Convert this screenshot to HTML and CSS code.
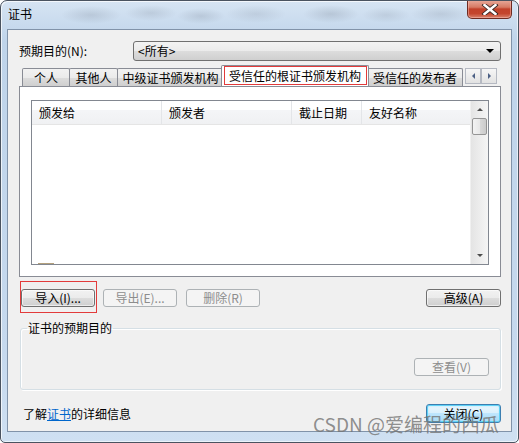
FILE: index.html
```html
<!DOCTYPE html>
<html lang="zh-CN">
<head>
  <meta charset="UTF-8">
  <meta name="viewport" content="width=device-width, initial-scale=1.0">
  <title>证书</title>
  <link rel="stylesheet" href="styles.css">
</head>
<body>
  <div class="window">
    <div class="titlebar">
      <span class="title">证书</span>
      <button class="close-btn">
        <svg width="18" height="11" viewBox="0 0 18 11">
          <path d="M3.5 1 L14.5 10 M14.5 1 L3.5 10" stroke="#3a2a28" stroke-width="4.2" stroke-linecap="square"/>
          <path d="M3.5 1 L14.5 10 M14.5 1 L3.5 10" stroke="#ffffff" stroke-width="2.4" stroke-linecap="square"/>
        </svg>
      </button>
    </div>

    <div class="client">
      <div class="purpose-row">
        <label class="purpose-label">预期目的(N):</label>
        <div class="combo">
          <span>&lt;所有&gt;</span>
          <span class="combo-arrow"></span>
        </div>
      </div>

      <div class="tabs">
        <div class="tab tab-personal">个人</div>
        <div class="tab tab-others">其他人</div>
        <div class="tab tab-inter">中级证书颁发机构</div>
        <div class="tab tab-active"><span class="mark">受信任的根证书颁发机构</span></div>
        <div class="tab tab-publisher">受信任的发布者</div>
        <div class="tab-scroll">
          <span class="scroll-btn"><span class="tri-left"></span></span>
          <span class="scroll-btn"><span class="tri-right"></span></span>
        </div>
      </div>

      <div class="tab-panel">
        <div class="list">
          <div class="list-main">
            <div class="list-header">
              <div class="col col-to">颁发给</div>
              <div class="col col-by">颁发者</div>
              <div class="col col-date">截止日期</div>
              <div class="col col-name">友好名称</div>
            </div>
            <div class="list-rows"></div>
            <div class="hstub"></div>
          </div>
          <div class="vscroll">
            <div class="vs-arrow"><span class="tri-up"></span></div>
            <div class="vs-thumb"></div>
            <div class="vs-track"></div>
            <div class="vs-arrow"><span class="tri-down"></span></div>
          </div>
        </div>
      </div>

      <div class="actions">
        <span class="marked"><button class="btn">导入(I)...</button></span>
        <button class="btn disabled">导出(E)...</button>
        <button class="btn disabled">删除(R)</button>
        <button class="btn btn-advanced">高级(A)</button>
      </div>

      <fieldset class="group">
        <legend>证书的预期目的</legend>
        <div class="group-body">
          <button class="btn disabled">查看(V)</button>
        </div>
      </fieldset>

      <div class="footer">
        <span class="info">了解<a href="#">证书</a>的详细信息</span>
        <button class="btn btn-default">关闭(C)</button>
      </div>
    </div>

    <div class="watermark">CSDN @爱编程的西瓜</div>
  </div>
</body>
</html>
```

FILE: styles.css
```css
body {
  margin: 0;
  background: #ffffff;
  font-family: "Noto Sans CJK SC", "DejaVu Sans", sans-serif;
  font-size: 12px;
  color: #000;
}
.window {
  position: relative;
  width: 519px;
  height: 443px;
  box-sizing: border-box;
  border: 1px solid #4a5360;
  border-radius: 7px 7px 5px 5px;
  background:
    radial-gradient(ellipse 30px 9px at 90px 14px, rgba(90, 100, 115, 0.18), transparent),
    radial-gradient(ellipse 26px 8px at 150px 12px, rgba(90, 100, 115, 0.16), transparent),
    radial-gradient(ellipse 24px 8px at 200px 15px, rgba(90, 100, 115, 0.18), transparent),
    radial-gradient(ellipse 30px 9px at 255px 13px, rgba(90, 100, 115, 0.14), transparent),
    radial-gradient(ellipse 28px 9px at 330px 13px, rgba(90, 100, 115, 0.2), transparent),
    radial-gradient(ellipse 24px 8px at 385px 14px, rgba(90, 100, 115, 0.14), transparent),
    radial-gradient(ellipse 30px 9px at 440px 13px, rgba(90, 100, 115, 0.16), transparent),
    linear-gradient(#d6e4f3, #bfd4ea 40px, #c6d9ee 80%, #cfe0f2);
  box-shadow: inset 1px 1px 0 rgba(255, 255, 255, 0.7), inset -1px -1px 0 rgba(255, 255, 255, 0.6);
  padding: 0 6px 10px 6px;
  overflow: hidden;
}
.titlebar {
  height: 28px;
  display: flex;
  justify-content: space-between;
  align-items: flex-start;
}
.title {
  margin: 5px 0 0 1px;
  line-height: 16px;
  font-size: 12px;
  color: #000;
}
.close-btn {
  width: 45px;
  height: 19px;
  margin: -1px 0 0 0;
  padding: 0;
  border: 1px solid #6e2b22;
  border-top: none;
  border-radius: 0 0 5px 5px;
  background: linear-gradient(#e9ab9c, #d77a64 40%, #c2412a 50%, #c4452d 75%, #d8826c);
  box-shadow: inset 0 0 0 1px rgba(255, 200, 190, 0.45);
  display: flex;
  align-items: center;
  justify-content: center;
}
.client {
  height: 403px;
  box-sizing: border-box;
  background: #f0f0f0;
  border: 1px solid #8193a9;
  padding: 11px 10px 0 11px;
}
.purpose-row {
  display: flex;
  align-items: center;
  height: 20px;
}
.purpose-label {
  width: 114px;
  line-height: 16px;
}
.combo {
  flex: 1;
  height: 20px;
  box-sizing: border-box;
  border: 1px solid #707070;
  border-radius: 3px;
  background: linear-gradient(#f3f3f3, #ebebeb 50%, #dddddd 50%, #cfcfcf);
  display: flex;
  align-items: center;
  justify-content: space-between;
  padding: 0 6px 0 4px;
  line-height: 16px;
}
.combo-arrow {
  width: 0;
  height: 0;
  border-left: 4px solid transparent;
  border-right: 4px solid transparent;
  border-top: 4px solid #000;
}
.tabs {
  display: flex;
  align-items: flex-end;
  height: 21px;
  margin-top: 4px;
  padding-left: 3px;
}
.tab {
  height: 18px;
  box-sizing: border-box;
  border: 1px solid #898c95;
  border-bottom: none;
  border-radius: 2px 2px 0 0;
  background: linear-gradient(#f2f2f2, #ebebeb 50%, #dddddd 50%, #cfcfcf);
  text-align: center;
  line-height: 16px;
  padding-top: 1px;
  margin-right: -1px;
}
.tab-personal { width: 48px; }
.tab-others { width: 49px; }
.tab-inter { width: 107px; }
.tab-active {
  width: 148px;
  height: 21px;
  margin: 0 -2px 0 -2px;
  background: #ffffff;
  position: relative;
  z-index: 1;
  padding: 0;
  display: flex;
  align-items: stretch;
  justify-content: center;
}
.tab-active .mark {
  display: block;
  width: 143px;
  box-sizing: border-box;
  border: 1px solid #e23b3b;
  line-height: 17px;
  margin-top: 0px;
  margin-bottom: 1px;
}
.tab-publisher { width: 96px; }
.tab-scroll {
  display: flex;
  margin-left: 3px;
  margin-bottom: 2px;
  gap: 0;
}
.scroll-btn {
  width: 16px;
  height: 16px;
  box-sizing: border-box;
  border: 1px solid #b5b9c2;
  background: linear-gradient(#f6f6f6, #e2e2e2);
  display: flex;
  align-items: center;
  justify-content: center;
}
.tri-left {
  border-top: 3px solid transparent;
  border-bottom: 3px solid transparent;
  border-right: 3px solid #4d6185;
}
.tri-right {
  border-top: 3px solid transparent;
  border-bottom: 3px solid transparent;
  border-left: 3px solid #4d6185;
}
.tab-panel {
  height: 191px;
  box-sizing: border-box;
  border: 1px solid #898c95;
  background: #ffffff;
  padding: 13px 11px 11px 11px;
}
.list {
  height: 100%;
  box-sizing: border-box;
  border: 1px solid #828790;
  display: flex;
}
.list-main {
  flex: 1;
  display: flex;
  flex-direction: column;
}
.list-header {
  display: flex;
  height: 23px;
  background: linear-gradient(#ffffff, #ffffff 40%, #f4f5f7 41%, #f0f1f3);
  border-bottom: 1px solid #e5e5e5;
}
.col {
  box-sizing: border-box;
  padding-left: 7px;
  line-height: 23px;
  border-right: 1px solid #e3e5e8;
}
.col-to { width: 130px; }
.col-by { width: 130px; }
.col-date { width: 70px; }
.col-name { flex: 1; border-right: none; }
.list-rows { flex: 1; }
.hstub {
  width: 16px;
  height: 1px;
  margin: 0 0 0 6px;
  background: #b3a07d;
}
.vscroll {
  width: 17px;
  display: flex;
  flex-direction: column;
  background: linear-gradient(to right, #e4e4e4, #f5f5f5);
  border-left: 1px solid #f0f0f0;
}
.vs-arrow {
  height: 17px;
  display: flex;
  align-items: center;
  justify-content: center;
}
.tri-up {
  border-left: 3px solid transparent;
  border-right: 3px solid transparent;
  border-bottom: 3px solid #4d4d4d;
}
.tri-down {
  border-left: 3px solid transparent;
  border-right: 3px solid transparent;
  border-top: 3px solid #4d4d4d;
}
.vs-thumb {
  height: 15px;
  margin: 0 1px;
  border: 1px solid #959595;
  border-radius: 2px;
  background: linear-gradient(to right, #f3f3f3, #e8e8e8 50%, #d9d9d9 50%, #cbcbcb);
}
.vs-track { flex: 1; }
.actions {
  display: flex;
  align-items: center;
  margin-top: 12px;
  padding-left: 2px;
  height: 18px;
}
.btn {
  width: 74px;
  height: 18px;
  box-sizing: border-box;
  padding: 0;
  border: 1px solid #707070;
  border-radius: 3px;
  background: linear-gradient(#f2f2f2, #ebebeb 50%, #dddddd 50%, #cfcfcf);
  box-shadow: inset 0 0 0 1px rgba(255, 255, 255, 0.6);
  font-family: inherit;
  font-size: 12px;
  line-height: 14px;
  color: #000;
}
.btn.disabled {
  border-color: #adb2b5;
  background: #f4f4f4;
  box-shadow: none;
  color: #8d8d8d;
}
.actions .btn { margin-right: 8px; }
.actions .btn.disabled + .btn.disabled { margin-left: 1px; }
.marked {
  position: relative;
  display: inline-flex;
}
.marked::after {
  content: "";
  position: absolute;
  left: -1px;
  top: -8px;
  width: 77px;
  height: 32px;
  border: 1px solid #e23b3b;
  box-sizing: border-box;
}
.actions .btn-advanced {
  margin: 0 0 0 auto;
  width: 75px;
}
.group {
  margin: 14px 0 0 1px;
  padding: 0 11px 13px 6px;
  border: 1px solid #d5dfe5;
  border-radius: 3px;
  box-shadow: inset 1px 1px 0 #ffffff, 1px 1px 0 #ffffff;
  min-width: 0;
}
.group legend {
  padding: 0 1px;
  line-height: 14px;
}
.group-body {
  display: flex;
  justify-content: flex-end;
  margin-top: 23px;
}
.group-body .btn { width: 75px; }
.footer {
  display: flex;
  justify-content: space-between;
  align-items: center;
  margin-top: 14px;
  padding-left: 4px;
}
.info { line-height: 16px; }
.info a {
  color: #0066cc;
  text-decoration: underline;
}
.btn-default {
  width: 75px;
  height: 19px;
  border-color: #3c7fb1;
  background: linear-gradient(#eaf6fd, #d9f0fc 50%, #bee6fd 50%, #a7d9f5);
  box-shadow: inset 0 0 0 1px #5fd1f6, inset 0 0 2px 1px #aee8fb;
}
.watermark {
  position: absolute;
  left: 312px;
  top: 412px;
  font-size: 19px;
  line-height: 22px;
  color: rgba(115, 115, 115, 0.8);
  white-space: nowrap;
  letter-spacing: 0px;
}
```
